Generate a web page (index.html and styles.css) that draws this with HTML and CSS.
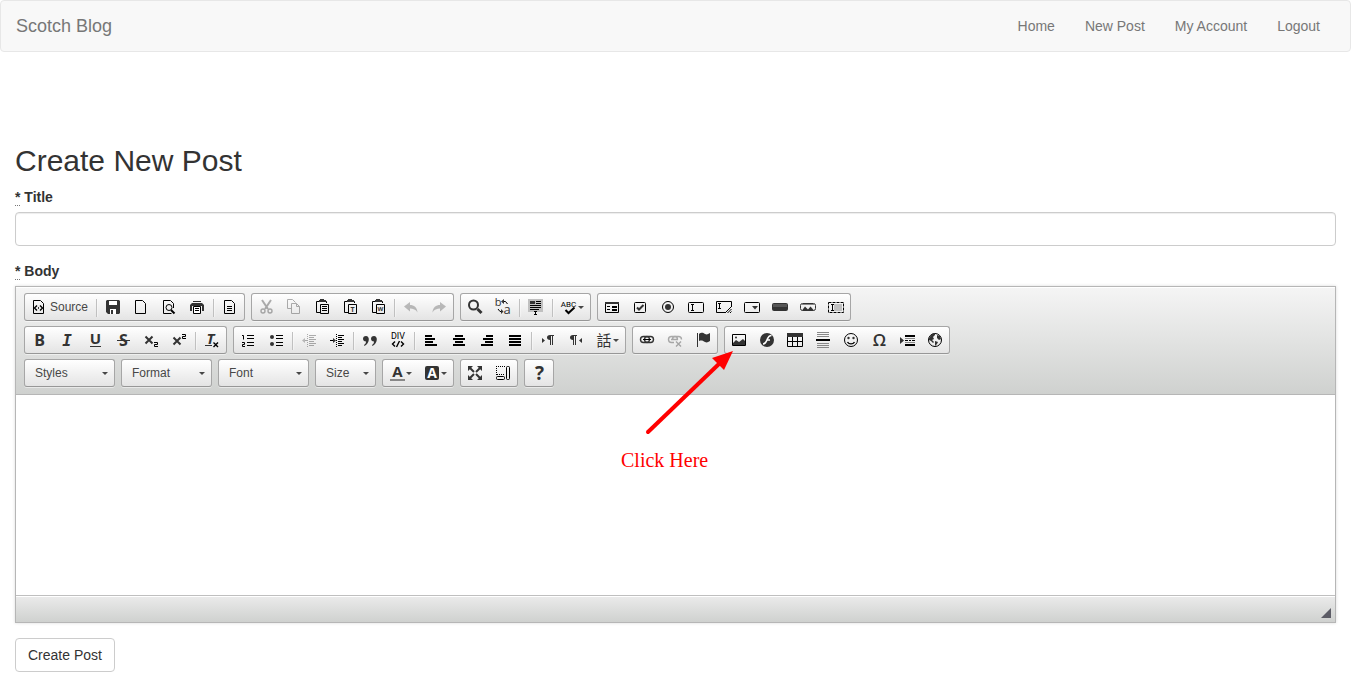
FILE: index.html
```html
<!DOCTYPE html>
<html lang="en">

<head>
    <meta charset="UTF-8">
    <meta name="viewport" content="width=device-width, initial-scale=1.0">
    <title>Scotch Blog</title>
    <link rel="stylesheet" href="styles.css">
</head>

<body>
    <nav class="navbar">
        <a class="navbar-brand" href="#">Scotch Blog</a>
        <ul class="navbar-nav">
            <li><a href="#">Home</a></li>
            <li><a href="#">New Post</a></li>
            <li><a href="#">My Account</a></li>
            <li><a href="#">Logout</a></li>
        </ul>
    </nav>

    <main class="container">
        <h2>Create New Post</h2>

        <form>
            <div class="form-group">
                <label for="post_title"><abbr title="required">*</abbr> Title</label>
                <input class="form-control" type="text" id="post_title">
            </div>

            <div class="form-group">
                <label for="post_body"><abbr title="required">*</abbr> Body</label>

                <div class="editor">
                    <div class="toolbar">
                        <!-- Row 1 -->
                        <div class="toolbar-row">
                            <div class="toolgroup">
                                <button type="button" class="tool"><svg class="icon" viewBox="0 0 16 16"><path class="line" d="M2.5 2.5h7l3 3v10h-10z"/><path class="line bolder" d="M6 7.5L3.500 10 6 12.500M9 7.500l2.500 2.500L9 12.500M7 10h1"/></svg><span class="tool-label">Source</span></button>
                                <span class="separator"></span>
                                <button type="button" class="tool" aria-label="Save"><svg class="icon" viewBox="0 0 16 16"><path d="M2 2h12l1 1v12l-1 1H3l-2-2V3z"/><path class="white" d="M4 3h8v4H4zM5 11h6v5H5z"/><path d="M6 12h2v4H6z"/></svg></button>
                                <button type="button" class="tool" aria-label="New Page"><svg class="icon" viewBox="0 0 16 16"><path class="line" d="M2.5 2.5h7l3 3v10h-10z"/></svg></button>
                                <button type="button" class="tool" aria-label="Preview"><svg class="icon" viewBox="0 0 16 16"><path class="line" d="M12.5 10V5.5l-3-3h-7v13h8"/><circle class="line" cx="8" cy="9.5" r="3"/><path class="line thick" d="M10 12l3.500 3.500"/></svg></button>
                                <button type="button" class="tool" aria-label="Print"><svg class="icon" viewBox="0 0 16 16"><path d="M4 3h8v1H4zM3 5h10l2 2v6h-2V8H3v5H1V7z"/><path class="white" d="M4 9h8v6H4z"/><path class="line" d="M4.5 8.5h7v7h-7zM6 10.5h4M6 12.5h4"/></svg></button>
                                <span class="separator"></span>
                                <button type="button" class="tool" aria-label="Templates"><svg class="icon" viewBox="0 0 16 16"><path class="line" d="M2.5 2.5h7l3 3v10h-10zM5 8.5h5M5 10.5h5M5 12.5h5"/></svg></button>
                            </div>

                            <div class="toolgroup">
                                <button type="button" class="tool off" aria-label="Cut"><svg class="icon" viewBox="0 0 16 16"><path class="line thick" d="M4 2l6 9M13 2l-6 9"/><circle class="line bolder" cx="5" cy="13" r="2"/><circle class="line bolder" cx="12" cy="13" r="2"/></svg></button>
                                <button type="button" class="tool off" aria-label="Copy"><svg class="icon" viewBox="0 0 16 16"><path class="line" d="M5 10.5H1.5v-9h5l3 3M5.500 5.5h5l3 3v7h-8zM10.5 5.5v3h3"/></svg></button>
                                <button type="button" class="tool" aria-label="Paste"><svg class="icon" viewBox="0 0 16 16"><path class="line" d="M5 3.5H2.5v11H6M11 3.5h1.5V5"/><path d="M6 1h4v1h2v2H5V2h1z"/><path class="line" d="M6.5 6.5h8v9h-8zM8 8.5h5M8 10.5h5M8 12.5h5"/></svg></button>
                                <button type="button" class="tool" aria-label="Paste as plain text"><svg class="icon" viewBox="0 0 16 16"><path class="line" d="M5 3.5H2.5v11H6M11 3.5h1.5V5"/><path d="M6 1h4v1h2v2H5V2h1z"/><path class="line" d="M6.5 6.5h8v9h-8z"/><text class="bold" x="10.5" y="14" font-size="7">T</text></svg></button>
                                <button type="button" class="tool" aria-label="Paste from Word"><svg class="icon" viewBox="0 0 16 16"><path class="line" d="M5 3.5H2.5v11H6M11 3.5h1.5V5"/><path d="M6 1h4v1h2v2H5V2h1z"/><path class="line" d="M6.5 6.5h8v9h-8z"/><text class="bold" x="10.5" y="13" font-size="6">W</text></svg></button>
                                <span class="separator"></span>
                                <button type="button" class="tool off" aria-label="Undo"><svg class="icon" viewBox="0 0 16 16"><path d="M1 8.5L7 4v3c4 0 7 2 7.500 7.500C13 11.500 10 10.500 7 10.500v3z"/></svg></button>
                                <button type="button" class="tool off" aria-label="Redo"><svg class="icon" viewBox="0 0 16 16"><path d="M15 8.5L9 4v3c-4 0-7 2-7.500 7.500C3 11.500 6 10.500 9 10.500v3z"/></svg></button>
                            </div>

                            <div class="toolgroup">
                                <button type="button" class="tool" aria-label="Find"><svg class="icon" viewBox="0 0 16 16"><circle class="line thick soft" cx="6.5" cy="7" r="4.5"/><path class="line heavy soft" d="M10.5 11l4 4"/></svg></button>
                                <button type="button" class="tool" aria-label="Replace"><svg class="icon" viewBox="0 0 16 16"><path class="line" d="M8 3.500h2.500l2 2.500M3 11l2 2.500h2"/><path d="M9 1v5L6 3.500zM6 11v5l2.500-2.500z"/><text x="3" y="8" font-size="11">b</text><text x="12" y="16" font-size="13">a</text></svg></button>
                                <span class="separator"></span>
                                <button type="button" class="tool" aria-label="Select All"><svg class="icon" viewBox="0 0 16 16"><path class="shade" d="M0 1h15v13H0z"/><path class="line" d="M8 3.5h5M8 5.5h5M2 7.5h11M2 9.5h11M2 11.5h9M6 13.5h3M7.5 13.5v3M6 16.5h3"/><path d="M2 3h5v3H2z"/></svg></button>
                                <span class="separator"></span>
                                <button type="button" class="tool" aria-label="Spell Check"><svg class="icon" viewBox="0 0 16 16"><text class="small" x="7.5" y="9" font-size="8">ABC</text><path class="line thick" d="M4.500 12l3 3 6-5.500"/></svg><span class="arrow"></span></button>
                            </div>

                            <div class="toolgroup">
                                <button type="button" class="tool" aria-label="Form"><svg class="icon" viewBox="0 0 16 16"><path class="line" d="M1.5 4.5h13v10h-13zM3 8.5h3M3 11.5h3M8 8.5h5M8 9.5h5M8 11.5h5M8 12.5h5"/><path d="M1 4h14v2H1z"/></svg></button>
                                <button type="button" class="tool" aria-label="Checkbox"><svg class="icon" viewBox="0 0 16 16"><rect class="line" x="2.5" y="4.5" width="11" height="10" rx="1"/><path class="line thick soft" d="M5 9.5l2 2L11.500 7"/></svg></button>
                                <button type="button" class="tool" aria-label="Radio Button"><svg class="icon" viewBox="0 0 16 16"><circle class="line" cx="8" cy="9" r="5.5"/><circle cx="8" cy="9" r="3"/></svg></button>
                                <button type="button" class="tool" aria-label="Text Field"><svg class="icon" viewBox="0 0 16 16"><rect class="line" x=".5" y="4.5" width="15" height="10" rx="1"/><path class="line" d="M3 6.5h3M4.5 6.5v6M3 12.5h3"/></svg></button>
                                <button type="button" class="tool" aria-label="Textarea"><svg class="icon" viewBox="0 0 16 16"><path class="line" d="M9 14.5H.5v-11h15V9M2 5.5h3M3.5 5.5v5M2 10.5h3M9 15l6.500-6.500M11.500 15l4-4M14 15l1.500-1.500"/></svg></button>
                                <button type="button" class="tool" aria-label="Selection Field"><svg class="icon" viewBox="0 0 16 16"><rect class="line" x=".5" y="4.5" width="15" height="10" rx="1"/><path d="M8 8h6l-3 3.500z"/></svg></button>
                                <button type="button" class="tool" aria-label="Button"><svg class="icon" viewBox="0 0 16 16"><rect x="0" y="5" width="16" height="8" rx="2"/><path class="mid" d="M1 6h14v3H1z"/></svg></button>
                                <button type="button" class="tool" aria-label="Image Button"><svg class="icon" viewBox="0 0 16 16"><rect class="line soft" x=".5" y="5.5" width="15" height="7" rx="2"/><path d="M2 12.500l3-4 3 3 2.500-3 3.500 4z"/><path class="gray" d="M2 6h12v1H2z"/></svg></button>
                                <button type="button" class="tool" aria-label="Hidden Field"><svg class="icon" viewBox="0 0 16 16"><path class="shade" d="M6 6h8v7H6z"/><path class="line dashed" d="M.5 4.500h15v10H.5z"/><path class="line" d="M3 6.5h3M4.5 6.5v6M3 12.5h3"/></svg></button>
                            </div>
                        </div>

                        <!-- Row 2 -->
                        <div class="toolbar-row">
                            <div class="toolgroup">
                                <button type="button" class="tool" aria-label="Bold"><svg class="icon" viewBox="0 0 16 16"><text class="bold" x="8.5" y="15" font-size="16">B</text></svg></button>
                                <button type="button" class="tool" aria-label="Italic"><svg class="icon" viewBox="0 0 16 16"><text class="bold slant" x="8" y="15" font-size="16">I</text></svg></button>
                                <button type="button" class="tool" aria-label="Underline"><svg class="icon" viewBox="0 0 16 16"><text class="bold" x="8.5" y="13" font-size="15">U</text><path d="M3 15h11v1H3z"/></svg></button>
                                <button type="button" class="tool" aria-label="Strike Through"><svg class="icon" viewBox="0 0 16 16"><text class="bold" x="8.5" y="15" font-size="16">S</text><path d="M2 9h13v1H2z"/></svg></button>
                                <button type="button" class="tool" aria-label="Subscript"><svg class="icon" viewBox="0 0 16 16"><path class="line thick soft" d="M2.500 5.500l7 7M9.500 5.500l-7 7"/><path class="line" d="M11 11.5h3.500v2h-3v2H15"/></svg></button>
                                <button type="button" class="tool" aria-label="Superscript"><svg class="icon" viewBox="0 0 16 16"><path class="line thick soft" d="M2.500 6.500l7 7M9.500 6.500l-7 7"/><path class="line" d="M11 3.5h3.500v2h-3v2H15"/></svg></button>
                                <span class="separator"></span>
                                <button type="button" class="tool" aria-label="Remove Format"><svg class="icon" viewBox="0 0 16 16"><text class="bold slant-sans" x="6.5" y="13" font-size="15">T</text><path d="M1 14h7v1H1z"/><path class="line bolder" d="M9.500 11.500l4.500 4.500M14 11.500L9.500 16"/></svg></button>
                            </div>

                            <div class="toolgroup">
                                <button type="button" class="tool" aria-label="Numbered List"><svg class="icon" viewBox="0 0 16 16"><path class="line" d="M2 4.5h1.500v4M2 11.5h2.500v2h-2v2H5M7 4.5h7M7 7.5h7M7 11.5h7M7 14.5h7"/></svg></button>
                                <button type="button" class="tool" aria-label="Bulleted List"><svg class="icon" viewBox="0 0 16 16"><circle cx="4" cy="6" r="2"/><circle cx="4" cy="13" r="2"/><path class="line" d="M8 4.5h7M8 7.5h7M8 11.5h7M8 14.5h7"/></svg></button>
                                <span class="separator"></span>
                                <button type="button" class="tool off" aria-label="Decrease Indent"><svg class="icon" viewBox="0 0 16 16"><path class="line" d="M8 4.5h7M8 6.5h5M8 8.5h7M8 10.5h5M8 12.5h7M8 14.5h5M2 9.5h5"/><path class="line dotted" d="M6.5 3v13"/><path d="M4 7v5L1 9.500z"/></svg></button>
                                <button type="button" class="tool" aria-label="Increase Indent"><svg class="icon" viewBox="0 0 16 16"><path class="line" d="M9 4.5h6M9 6.5h4M9 8.5h6M9 10.5h4M9 12.5h6M9 14.5h4M1 9.5h4"/><path class="line dotted" d="M7.5 3v13"/><path d="M4 7v5l3-2.500z"/></svg></button>
                                <span class="separator"></span>
                                <button type="button" class="tool" aria-label="Block Quote"><svg class="icon" viewBox="0 0 16 16"><path d="M4 5c4 0 4 7-1.500 10l-.5-1c1.500-1 2-2 2-3.500-4 0-4-5.500 0-5.500zM12 5c4 0 4 7-1.500 10l-.5-1c1.500-1 2-2 2-3.500-4 0-4-5.500 0-5.500z"/></svg></button>
                                <button type="button" class="tool" aria-label="Create Div Container"><svg class="icon" viewBox="0 0 16 16"><text class="small" x="8" y="8" font-size="9">DIV</text><path class="line bolder" d="M5 10.500L2.500 13 5 15.500M11 10.500l2.500 2.500-2.500 2.500M9.500 10l-3 6"/></svg></button>
                                <span class="separator"></span>
                                <button type="button" class="tool" aria-label="Align Left"><svg class="icon black" viewBox="0 0 16 16"><path d="M2 4h7v2H2zM2 7h10v2H2zM2 10h8v2H2zM2 13h12v2H2z"/></svg></button>
                                <button type="button" class="tool" aria-label="Center"><svg class="icon black" viewBox="0 0 16 16"><path d="M4 4h8v2H4zM2 7h12v2H2zM4 10h8v2H4zM2 13h12v2H2z"/></svg></button>
                                <button type="button" class="tool" aria-label="Align Right"><svg class="icon black" viewBox="0 0 16 16"><path d="M7 4h7v2H7zM4 7h10v2H4zM6 10h8v2H6zM2 13h12v2H2z"/></svg></button>
                                <button type="button" class="tool" aria-label="Justify"><svg class="icon black" viewBox="0 0 16 16"><path d="M2 4h12v2H2zM2 7h12v2H2zM2 10h12v2H2zM2 13h12v2H2z"/></svg></button>
                                <span class="separator"></span>
                                <button type="button" class="tool" aria-label="Text direction from left to right"><svg class="icon" viewBox="0 0 16 16"><path d="M2 7v5l3-2.500z"/><path d="M14 4v1h-1v9h-1V5h-1v9h-1V9C6 9 6 4 10 4z"/></svg></button>
                                <button type="button" class="tool" aria-label="Text direction from right to left"><svg class="icon" viewBox="0 0 16 16"><path d="M14 7v5l-3-2.500z"/><path d="M9 4v1H8v9H7V5H6v9H5V9C1 9 1 4 5 4z"/></svg></button>
                                <button type="button" class="tool" aria-label="Set language"><svg class="icon" viewBox="0 0 16 16"><text class="cjk" x="8" y="15" font-size="15">話</text></svg><span class="arrow"></span></button>
                            </div>

                            <div class="toolgroup">
                                <button type="button" class="tool" aria-label="Link"><svg class="icon" viewBox="0 0 16 16"><rect class="line bolder soft" x="1.5" y="5.5" width="9" height="6" rx="3"/><rect class="line bolder soft" x="5.5" y="5.5" width="9" height="6" rx="3"/><path class="line" d="M4 8.5h8"/></svg></button>
                                <button type="button" class="tool off" aria-label="Unlink"><svg class="icon" viewBox="0 0 16 16"><path class="line bolder" d="M7 11.500H4.500a3 3 0 0 1 0-6h3a3 3 0 0 1 3 3M5.500 8.500a3 3 0 0 1 3-3h3a3 3 0 0 1 3 3M4 8.500h7"/><path class="line bolder" d="M9 10.500l5 5M14 10.500l-5 5"/></svg></button>
                                <button type="button" class="tool" aria-label="Anchor"><svg class="icon" viewBox="0 0 16 16"><path d="M2 2h1v14H2zM4 3c3-2 4-1 6 0s3 0 5-1v8c-2 1-3 2-5 1s-3-2-6-1z"/></svg></button>
                            </div>

                            <div class="toolgroup">
                                <button type="button" class="tool" aria-label="Image"><svg class="icon" viewBox="0 0 16 16"><path class="line" d="M1.5 3.5h13v11h-13z"/><path d="M2 14v-2l3-3 3 2 4-3 2 2v4z"/><circle cx="5" cy="6.5" r="1"/></svg></button>
                                <button type="button" class="tool" aria-label="Flash"><svg class="icon" viewBox="0 0 16 16"><circle cx="8" cy="9" r="7"/><path class="light-line" d="M12.500 4.500c-3 0-3.500 2-4.500 4.500s-1.500 4-4 4M7.500 9H11"/></svg></button>
                                <button type="button" class="tool" aria-label="Table"><svg class="icon" viewBox="0 0 16 16"><path class="line" d="M.5 3.5h15v12H.5zM5.5 5v10M10.5 5v10M1 10.5h14"/><path d="M0 2h16v4H0z"/></svg></button>
                                <button type="button" class="tool" aria-label="Horizontal Line"><svg class="icon" viewBox="0 0 16 16"><path class="gray" d="M2 1h12v1H2zM2 3h12v1H2zM2 5h12v1H2zM2 12h12v1H2zM2 14h12v1H2zM2 16h12v1H2z"/><path class="black" d="M1 8h14v2H1z"/></svg></button>
                                <button type="button" class="tool" aria-label="Smiley"><svg class="icon" viewBox="0 0 16 16"><circle class="line" cx="8" cy="9" r="6.5"/><circle cx="5.5" cy="7" r="1.2"/><circle cx="10.5" cy="7" r="1.2"/><path class="line bolder" d="M4.500 11c1.500 2.500 5.500 2.500 7 0"/></svg></button>
                                <button type="button" class="tool" aria-label="Special Character"><svg class="icon" viewBox="0 0 16 16"><text class="semi" x="8.5" y="15" font-size="17">Ω</text></svg></button>
                                <button type="button" class="tool" aria-label="Page Break"><svg class="icon" viewBox="0 0 16 16"><path d="M1 6v7l4-3.500z"/><path class="black" d="M6 4h10v2H6zM6 13h10v2H6zM6 9h3v1H6zM10 9h2v1h-2zM13 9h3v1h-3z"/><path class="gray" d="M6 7h10v1H6zM6 11h10v1H6z"/></svg></button>
                                <button type="button" class="tool" aria-label="IFrame"><svg class="icon" viewBox="0 0 16 16"><circle class="line" cx="8" cy="9" r="6.5"/><path d="M2 7l3-4 3-1v2L6 6l1 2-2 1 2 2-1 1-2-2-2-1zM10 4l3 1 1 3-2 1-2-2zM8 10l3 1-1 2-2 2z"/></svg></button>
                            </div>
                        </div>

                        <!-- Row 3 -->
                        <div class="toolbar-row">
                            <div class="toolgroup combo">
                                <select aria-label="Formatting Styles"><option>Styles</option></select>
                                <span class="arrow"></span>
                            </div>
                            <div class="toolgroup combo">
                                <select aria-label="Paragraph Format"><option>Format</option></select>
                                <span class="arrow"></span>
                            </div>
                            <div class="toolgroup combo">
                                <select aria-label="Font Name"><option>Font</option></select>
                                <span class="arrow"></span>
                            </div>
                            <div class="toolgroup combo combo-small">
                                <select aria-label="Font Size"><option>Size</option></select>
                                <span class="arrow"></span>
                            </div>

                            <div class="toolgroup">
                                <button type="button" class="tool" aria-label="Text Color"><svg class="icon" viewBox="0 0 16 16"><text class="bold" x="8.5" y="13" font-size="15">A</text><path class="gray" d="M1 15h15v2H1z"/></svg><span class="arrow"></span></button>
                                <button type="button" class="tool" aria-label="Background Color"><svg class="icon" viewBox="0 0 16 16"><rect x="1" y="2" width="14" height="14" rx="2"/><text class="bold white" x="8" y="14" font-size="14">A</text></svg><span class="arrow"></span></button>
                            </div>

                            <div class="toolgroup">
                                <button type="button" class="tool" aria-label="Maximize"><svg class="icon" viewBox="0 0 16 16"><path d="M1 2h5L1 7zM15 2v5l-5-5zM1 16v-5l5 5zM15 16h-5l5-5z"/><path class="line thick soft" d="M3 4l4 4M13 4L9 8M3 14l4-4M13 14l-4-4"/></svg></button>
                                <button type="button" class="tool" aria-label="Show Blocks"><svg class="icon" viewBox="0 0 16 16"><path class="line dotted" d="M1 2.5h9M1.5 4v7M2 10.5h8"/><rect class="line" x="11.5" y="2.5" width="3" height="13" rx="1"/><rect class="line" x="1.5" y="12.5" width="8" height="3" rx="1"/></svg></button>
                            </div>

                            <div class="toolgroup">
                                <button type="button" class="tool" aria-label="About"><svg class="icon" viewBox="0 0 16 16"><text class="bold" x="8.5" y="16" font-size="19">?</text></svg></button>
                            </div>
                        </div>
                    </div>

                    <textarea class="editor-body" id="post_body"></textarea>

                    <div class="editor-footer">
                        <span class="resizer"></span>
                    </div>

                    <!-- Hint pointing at the image button -->
                    <div class="hint">
                        <svg class="hint-arrow" viewBox="0 0 112 90"><path d="M27 81L100 11" stroke="#f00" stroke-width="4" stroke-linecap="round"/><path d="M112 0L91 7l12 12z" fill="#f00"/></svg>
                        <span class="hint-text">Click Here</span>
                    </div>
                </div>
            </div>

            <button type="submit" class="btn">Create Post</button>
        </form>
    </main>
</body>

</html>
```

FILE: styles.css
```css
* {
    box-sizing: border-box;
}

body {
    margin: 0;
    background-color: #fff;
    font-family: "Liberation Sans", Arial, sans-serif;
    font-size: 14px;
    line-height: 20px;
    color: #333;
}

/* Navbar */
.navbar {
    display: flex;
    justify-content: space-between;
    min-height: 52px;
    padding: 0 15px;
    background-color: #f8f8f8;
    border: 1px solid #e7e7e7;
    border-radius: 4px;
}

.navbar a {
    color: #777;
    text-decoration: none;
}

.navbar-brand {
    padding: 15px 0;
    font-size: 18px;
}

.navbar-nav {
    display: flex;
    margin: 0;
    padding: 0;
    list-style: none;
}

.navbar-nav a {
    display: block;
    padding: 15px;
}

/* Form */
.container {
    padding: 92px 15px 15px;
}

h2 {
    margin: 0 0 10px;
    font-size: 30px;
    font-weight: 500;
    line-height: 33px;
}

.form-group {
    margin-bottom: 15px;
}

label {
    display: block;
    margin-bottom: 5px;
    font-weight: bold;
}

abbr[title] {
    border-bottom: 1px dotted #777;
    text-decoration: none;
    cursor: help;
}

.form-control {
    display: block;
    width: 100%;
    height: 34px;
    padding: 6px 12px;
    border: 1px solid #ccc;
    border-radius: 4px;
    font: inherit;
    color: #555;
    box-shadow: inset 0 1px 1px rgba(0, 0, 0, 0.075);
}

.btn {
    display: block;
    height: 34px;
    padding: 6px 12px;
    background-color: #fff;
    border: 1px solid #ccc;
    border-radius: 4px;
    font: inherit;
    color: #333;
    cursor: pointer;
}

/* Editor */
.editor {
    position: relative;
    border: 1px solid #b6b6b6;
    box-shadow: 0 0 3px rgba(0, 0, 0, 0.15);
}

.toolbar {
    padding: 6px 8px 2px;
    border-bottom: 1px solid #b6b6b6;
    background: linear-gradient(#f5f5f5, #cfd1cf);
    box-shadow: inset 0 1px 0 #fff;
}

.toolbar-row {
    display: flex;
    flex-wrap: wrap;
    column-gap: 6px;
}

.toolgroup {
    display: flex;
    height: 28px;
    margin-bottom: 5px;
    border: 1px solid #a6a6a6;
    border-bottom-color: #979797;
    border-radius: 3px;
    background: linear-gradient(#fff, #e4e4e4);
    box-shadow: 0 1px 0 rgba(255, 255, 255, 0.5);
}

.tool {
    display: flex;
    height: 26px;
    padding: 4px 6px;
    background: none;
    border: 0;
    font-family: inherit;
    font-size: 12px;
    color: #474747;
    cursor: default;
}

.tool.off {
    opacity: 0.3;
}

.tool-label {
    padding-left: 3px;
    line-height: 19px;
}

.separator {
    width: 1px;
    height: 18px;
    margin: 5px 2px 0;
    background-color: #c0c0c0;
    box-shadow: 1px 0 1px rgba(255, 255, 255, 0.5);
}

.arrow {
    width: 0;
    height: 0;
    margin: 8px 0 0 1px;
    border: 3px solid transparent;
    border-top-color: #474747;
    border-bottom: 0;
}

/* Icons */
.icon {
    width: 16px;
    height: 16px;
    fill: #333;
    overflow: visible;
}

.icon .line {
    fill: none;
    stroke: #000;
    stroke-width: 1px;
}

.icon .soft {
    stroke: #333;
}

.icon .bolder {
    stroke-width: 1.4px;
}

.icon .thick {
    stroke-width: 2px;
}

.icon .heavy {
    stroke-width: 3px;
}

.icon .dashed {
    stroke-dasharray: 3 1;
}

.icon .dotted {
    stroke-dasharray: 1 1;
}

.icon .light-line {
    fill: none;
    stroke: #fff;
    stroke-width: 1.6px;
}

.icon.black,
.icon .black {
    fill: #000;
}

.icon .white {
    fill: #fff;
}

.icon .gray {
    fill: #888;
}

.icon .mid {
    fill: #555;
}

.icon .shade {
    fill: #c0c0c0;
}

.icon text {
    font-family: "Open Sans", sans-serif;
    text-anchor: middle;
}

.icon .bold {
    font-weight: bold;
}

.icon .semi {
    font-weight: 600;
}

.icon .slant {
    font-family: "DejaVu Sans Mono", monospace;
    font-style: italic;
}

.icon .slant-sans {
    font-style: italic;
}

.icon .small {
    font-family: Roboto, sans-serif;
    fill: #000;
}

.icon .cjk {
    font-family: "Noto Sans CJK TC", sans-serif;
}

/* Drop-downs */
.combo {
    position: relative;
    width: 91px;
}

.combo-small {
    width: 61px;
}

.combo select {
    width: 100%;
    height: 26px;
    padding: 0 16px 0 10px;
    appearance: none;
    background: none;
    border: 0;
    font-family: inherit;
    font-size: 12px;
    color: #474747;
}

.combo .arrow {
    position: absolute;
    top: 12px;
    right: 6px;
    margin: 0;
    pointer-events: none;
}

.editor-body {
    display: block;
    width: 100%;
    height: 200px;
    padding: 20px;
    border: 0;
    outline: 0;
    resize: none;
    font: inherit;
}

.editor-footer {
    display: flex;
    justify-content: flex-end;
    align-items: flex-end;
    height: 27px;
    padding: 4px;
    border-top: 1px solid #bfbfbf;
    background: linear-gradient(#ebebeb, #cfd1cf);
    box-shadow: inset 0 1px 0 #fff;
}

.resizer {
    border: 5px solid #5c5c66;
    border-top-color: transparent;
    border-left-color: transparent;
}

/* Hint */
.hint {
    position: absolute;
    top: 64px;
    left: 605px;
    width: 112px;
    color: #f00;
    pointer-events: none;
}

.hint-arrow {
    display: block;
    width: 112px;
    height: 90px;
}

.hint-text {
    display: block;
    padding-top: 7px;
    font-family: "Liberation Serif", "Times New Roman", serif;
    font-size: 20px;
    line-height: 24px;
}
```
